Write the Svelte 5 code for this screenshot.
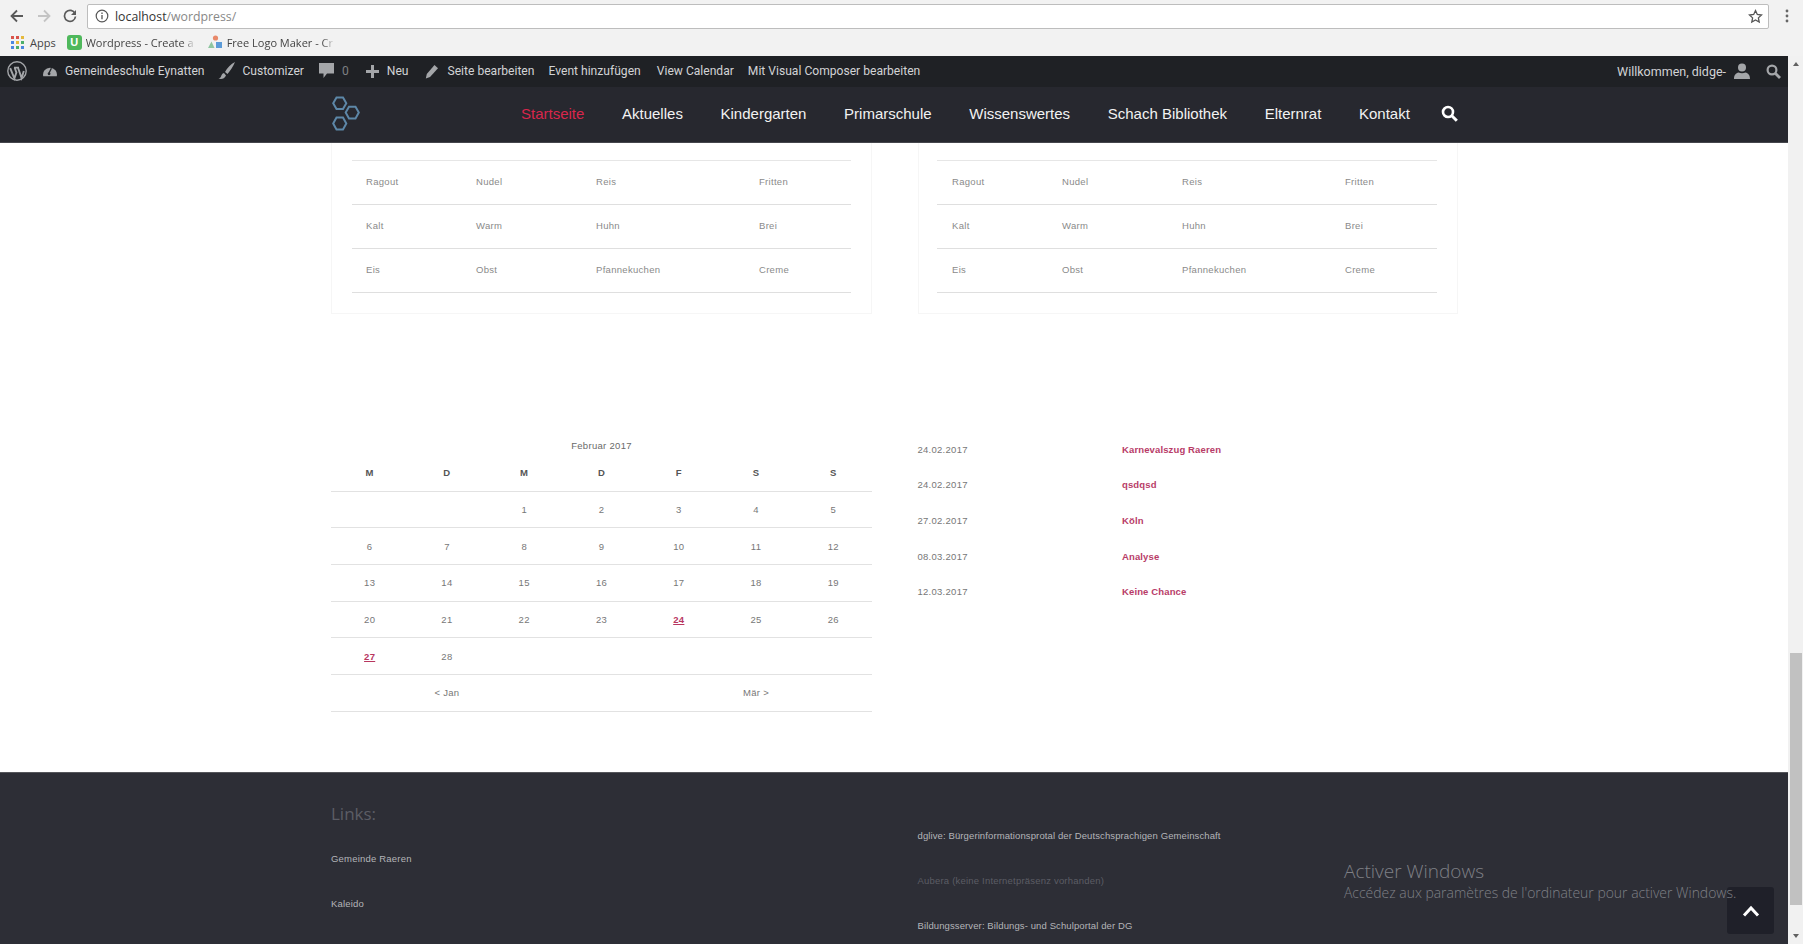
<script>
  const menu = ['Aktuelles', 'Kindergarten', 'Primarschule', 'Wissenswertes', 'Schach Bibliothek', 'Elternrat', 'Kontakt']
  const food = [
    ['Ragout', 'Nudel', 'Reis', 'Fritten'],
    ['Kalt', 'Warm', 'Huhn', 'Brei'],
    ['Eis', 'Obst', 'Pfannekuchen', 'Creme']
  ]
  const days = ['M', 'D', 'M', 'D', 'F', 'S', 'S']
  const weeks = [
    ['', '', 1, 2, 3, 4, 5],
    [6, 7, 8, 9, 10, 11, 12],
    [13, 14, 15, 16, 17, 18, 19],
    [20, 21, 22, 23, 24, 25, 26],
    [27, 28, '', '', '', '', '']
  ]
  const linked = [24, 27]
  const events = [
    ['24.02.2017', 'Karnevalszug Raeren'],
    ['24.02.2017', 'qsdqsd'],
    ['27.02.2017', 'Köln'],
    ['08.03.2017', 'Analyse'],
    ['12.03.2017', 'Keine Chance']
  ]
</script>

<div class="screen">
  <div class="browser">
    <div class="toolbar">
      <svg class="nav-btn" width="14" height="14" viewBox="0 0 14 14"><path d="M13 7H2M7 1.500 1.500 7 7 12.500" fill="none" stroke="#5a5a5a" stroke-width="1.800" /></svg>
      <svg class="nav-btn" width="14" height="14" viewBox="0 0 14 14"><path d="M1 7h11M7 1.500 12.500 7 7 12.500" fill="none" stroke="#c4c4c4" stroke-width="1.800" /></svg>
      <svg class="nav-btn" width="14" height="14" viewBox="0 0 14 14"><path d="M12 4.500A5.500 5.500 0 1 0 12.500 7.500" fill="none" stroke="#5a5a5a" stroke-width="1.700" /><path d="M13 1v5H8z" fill="#5a5a5a" /></svg>
      <div class="omnibox">
        <svg width="14" height="14" viewBox="0 0 14 14"><circle cx="7" cy="7" r="5.800" fill="none" stroke="#555" stroke-width="1.200" /><path d="M7 6v4.200M7 3.600v1.400" stroke="#555" stroke-width="1.300" /></svg>
        <span class="url">localhost<span class="url-path">/wordpress/</span></span>
        <svg class="star" width="15" height="15" viewBox="0 0 15 15"><path d="m7.500 1.600 1.800 3.900 4.200.5-3.100 2.900.8 4.200-3.700-2.100-3.700 2.100.8-4.200L1.500 6l4.200-.5z" fill="none" stroke="#555" stroke-width="1.300" /></svg>
      </div>
      <svg class="kebab" width="4" height="14" viewBox="0 0 4 14"><circle cx="2" cy="2" r="1.400" fill="#666" /><circle cx="2" cy="7" r="1.400" fill="#666" /><circle cx="2" cy="12" r="1.400" fill="#666" /></svg>
    </div>
    <div class="bookmarks">
      <svg width="13" height="13" viewBox="0 0 13 13">
        <g fill="#d9534a"><rect width="3" height="3" /><rect x="5" width="3" height="3" /></g>
        <rect x="10" width="3" height="3" fill="#e5b93c" />
        <g fill="#4a86e0"><rect y="5" width="3" height="3" /><rect y="10" width="3" height="3" /></g>
        <rect x="5" y="5" width="3" height="3" fill="#e5b93c" />
        <rect x="10" y="5" width="3" height="3" fill="#4caf6a" />
        <rect x="5" y="10" width="3" height="3" fill="#4caf6a" />
        <rect x="10" y="10" width="3" height="3" fill="#4a86e0" />
      </svg>
      <span class="mark apps">Apps</span>
      <span class="u-icon">U</span>
      <span class="mark fade w-one">Wordpress - Create a</span>
      <svg class="logo-mark" width="14" height="14" viewBox="0 0 14 14"><circle cx="7.500" cy="3" r="2.600" fill="#e8896a" /><path d="M3.500 6.500 6.500 13H0z" fill="#8fc6a0" /><rect x="8" y="7" width="6" height="6" fill="#5c9bd8" /></svg>
      <span class="mark fade w-two">Free Logo Maker - Cr</span>
    </div>
  </div>

  <div class="body">
    <div class="page">
      <div class="adminbar">
        <svg class="wp" width="20" height="20" viewBox="0 0 20 20"><circle cx="10" cy="10" r="9.200" fill="none" stroke="#a4a6a9" stroke-width="1.400" /><path d="M3.200 7.200 7.400 17.400l2-5.800-1.700-4.800M7 6.600h5M11 6.800l3.600 10.200 2.200-7" fill="none" stroke="#a4a6a9" stroke-width="1.900" /></svg>
        <svg class="a-dash" width="16" height="17" viewBox="0 0 17 17"><path d="M1.300 13.500a7.400 7.400 0 1 1 14.400 0z" fill="#a4a6a9" /><path d="m7 11 3-6" stroke="#23262b" stroke-width="1.400" /><circle cx="7.500" cy="11" r="1.500" fill="#23262b" /></svg>
        <span class="a-site">Gemeindeschule Eynatten</span>
        <svg class="a-brush" width="18" height="20" viewBox="0 0 18 20"><path d="M17 1C13 3 9 7 7 11l2.500 2C12 10 15 6 17 1zM6 12c-2 .5-2.500 2-3 3.500-.3 1-1.300 1.700-2.500 2 2.500 1 6 .5 7.500-3z" fill="#a4a6a9" /></svg>
        <span class="a-custom">Customizer</span>
        <svg class="a-bubble" width="15" height="16" viewBox="0 0 15 16"><path d="M0 0h15v10.500H8L4.500 15v-4.500H0z" fill="#a4a6a9" /></svg>
        <span class="a-zero">0</span>
        <svg class="a-plus" width="13" height="13" viewBox="0 0 13 13"><path d="M6.500 0v13M0 6.500h13" stroke="#a4a6a9" stroke-width="3" /></svg>
        <span class="a-neu">Neu</span>
        <svg class="a-pencil" width="14" height="15" viewBox="0 0 14 15"><path d="M9.500 1 13 4.300 5 13 .8 14.500 1.800 10z" fill="#a4a6a9" /></svg>
        <span class="a-edit">Seite bearbeiten</span>
        <span class="a-event">Event hinzufügen</span>
        <span class="a-cal">View Calendar</span>
        <span class="a-vc">Mit Visual Composer bearbeiten</span>
        <span class="a-hello">Willkommen, didge-</span>
        <svg class="a-user" width="16" height="17" viewBox="0 0 16 17"><circle cx="8" cy="4.500" r="4" fill="#a4a6a9" /><path d="M0 16c0-4 2-6 4.500-6.500 2 1 5 1 7 0C14 10 16 12 16 16z" fill="#a4a6a9" /></svg>
        <svg class="a-search" width="15" height="15" viewBox="0 0 15 15"><circle cx="6" cy="6" r="4.400" fill="none" stroke="#a4a6a9" stroke-width="2.200" /><path d="m9.500 9.500 4.500 4.500" stroke="#a4a6a9" stroke-width="2.800" /></svg>
      </div>

      <header class="mainnav">
        <svg class="logo" width="32" height="36" viewBox="0 0 32 36">
          <g fill="none" stroke="#5d87a8" stroke-width="2">
            <path d="M7.500 1.500h6.500l3.300 5.800-3.300 5.800H7.500L4.200 7.300z" />
            <path d="M20 10.800h6.500l3.300 5.800-3.300 5.800H20l-3.300-5.800z" />
            <path d="M7.500 21.500h6.500l3.300 6-3.300 6H7.500l-3.300-6z" />
          </g>
        </svg>
        <nav class="menu">
          <span class="active">Startseite</span>
          {#each menu as item}
            <span>{item}</span>
          {/each}
          <svg class="menu-search" width="17" height="17" viewBox="0 0 17 17"><circle cx="7" cy="7" r="5" fill="none" stroke="#fff" stroke-width="2.600" /><path d="m10.800 10.800 5 5" stroke="#fff" stroke-width="3" /></svg>
        </nav>
      </header>

      <main>
        <section class="wrap cards">
          {#each [0, 1] as card}
            <div class="card">
              <table>
                <tbody>
                  {#each food as row}
                    <tr>
                      {#each row as cell}
                        <td>{cell}</td>
                      {/each}
                    </tr>
                  {/each}
                </tbody>
              </table>
            </div>
          {/each}
        </section>

        <section class="wrap agenda">
          <div class="calendar">
            <div class="cal-title">Februar 2017</div>
            <div class="cal-row head">
              {#each days as d}
                <span>{d}</span>
              {/each}
            </div>
            {#each weeks as week}
              <div class="cal-row">
                {#each week as n}
                  <span class:hit={linked.includes(n)}>{n}</span>
                {/each}
              </div>
            {/each}
            <div class="cal-row">
              <span class="prev">&lt; Jan</span>
              <span class="next">Mär &gt;</span>
            </div>
          </div>
          <ul class="events">
            {#each events as e}
              <li><span class="date">{e[0]}</span><span class="title">{e[1]}</span></li>
            {/each}
          </ul>
        </section>
      </main>

      <footer>
        <div class="wrap foot">
          <div class="foot-left">
            <h4>Links:</h4>
            <p>Gemeinde Raeren</p>
            <p>Kaleido</p>
          </div>
          <div class="foot-right">
            <p>dglive: Bürgerinformationsprotal der Deutschsprachigen Gemeinschaft</p>
            <p class="dim">Aubera (keine Internetpräsenz vorhanden)</p>
            <p>Bildungsserver: Bildungs- und Schulportal der DG</p>
          </div>
        </div>
      </footer>

      <div class="totop">
        <svg width="18" height="12" viewBox="0 0 18 12"><path d="M2 10.500 9 3l7 7.500" fill="none" stroke="#fff" stroke-width="3" /></svg>
      </div>
      <div class="watermark">
        <div class="wm-big">Activer Windows</div>
        <div class="wm-small">Accédez aux paramètres de l'ordinateur pour activer Windows.</div>
      </div>
    </div>

    <div class="scrollbar">
      <span class="arrow up"></span>
      <div class="track"><div class="thumb"></div></div>
      <span class="arrow down"></span>
    </div>
  </div>
</div>

<style>
  :global(body) {
    margin: 0;
    overflow: hidden;
    background: #fff;
  }
  .screen {
    width: 1803px;
    height: 944px;
    display: flex;
    flex-direction: column;
    overflow: hidden;
    font-family: 'Liberation Sans', Arial, sans-serif;
  }

  /* browser chrome */
  .browser {
    height: 56px;
    flex: none;
    background: #f2f2f2;
    font-family: 'Open Sans', sans-serif;
  }
  .toolbar {
    height: 32px;
    display: flex;
    align-items: center;
    padding-left: 10px;
  }
  .nav-btn {
    margin-right: 12.500px;
  }
  .omnibox {
    width: 1682px;
    height: 25px;
    box-sizing: border-box;
    margin-left: -2.500px;
    display: flex;
    align-items: center;
    padding: 0 5px 0 7px;
    background: #fff;
    border: 1px solid #bdbdbd;
    border-radius: 2px;
    font-size: 12.300px;
  }
  .url {
    margin-left: 6px;
    color: #333;
  }
  .url-path {
    color: #888;
  }
  .star {
    margin-left: auto;
  }
  .kebab {
    margin-left: 16px;
  }
  .bookmarks {
    height: 24px;
    box-sizing: border-box;
    padding: 0 0 4px 11px;
    display: flex;
    align-items: center;
    font-size: 11px;
    color: #444;
    white-space: nowrap;
  }
  .mark {
    display: block;
  }
  .apps {
    margin-left: 6px;
  }
  .u-icon {
    margin-left: 11px;
    width: 15px;
    height: 15px;
    border-radius: 3px;
    background: #4fb85c;
    color: #fff;
    font: bold 11px/15px 'Liberation Sans', sans-serif;
    text-align: center;
  }
  .fade {
    -webkit-mask-image: linear-gradient(to right, #000 88%, transparent);
    mask-image: linear-gradient(to right, #000 88%, transparent);
  }
  .w-one {
    margin-left: 4px;
    width: 110px;
  }
  .logo-mark {
    margin-left: 12px;
  }
  .w-two {
    margin-left: 5px;
    width: 108px;
  }

  .body {
    flex: 1;
    min-height: 0;
    display: flex;
  }
  .page {
    position: relative;
    width: 1788px;
    display: flex;
    flex-direction: column;
    overflow: hidden;
  }

  /* wordpress admin bar */
  .adminbar {
    height: 31px;
    flex: none;
    display: flex;
    align-items: center;
    padding-bottom: 1px;
    background: #1f2125;
    color: #d2d3d5;
    font-family: Roboto, sans-serif;
    font-size: 12.100px;
    white-space: nowrap;
    box-sizing: border-box;
  }
  .adminbar svg {
    flex: none;
  }
  .wp { margin-left: 7px; }
  .a-dash { margin-left: 15px; }
  .a-site { margin-left: 7px; }
  .a-brush { margin-left: 14px; }
  .a-custom { margin-left: 6px; }
  .a-bubble { margin-left: 15px; }
  .a-zero { margin-left: 8px; color: #7d7f82; }
  .a-plus { margin-left: 17px; }
  .a-neu { margin-left: 8px; }
  .a-pencil { margin-left: 17px; }
  .a-edit { margin-left: 8px; }
  .a-event { margin-left: 14px; }
  .a-cal { margin-left: 16px; }
  .a-vc { margin-left: 14px; }
  .a-hello { margin-left: auto; font-size: 12.500px; }
  .a-user { margin-left: 8px; }
  .a-search { margin: 0 7px 0 16px; }

  /* site header */
  .mainnav {
    height: 55.500px;
    flex: none;
    box-sizing: border-box;
    display: flex;
    align-items: center;
    padding: 0 0 1px 329px;
    background: #27282f;
    border-bottom: 1px solid #45464c;
  }
  .menu {
    display: flex;
    align-items: center;
    gap: 37.650px;
    margin-left: 160px;
    color: #f2f2f2;
    font-size: 15px;
  }
  .menu-search {
    margin-left: -7px;
  }
  .active {
    color: #d8264c;
  }

  .wrap {
    display: grid;
    grid-template-columns: 541px 540.500px;
    column-gap: 45.500px;
    margin-left: 331px;
  }

  /* cards cut off under the header */
  main {
    flex: 1;
    min-height: 0;
  }
  .card {
    height: 171px;
    box-sizing: border-box;
    padding: 17.500px 20px 0;
    border: 1px solid #f6f6f6;
    border-top: 0;
  }
  .card + .card {
    padding-left: 18.500px;
  }
  table {
    width: 100%;
    border-collapse: collapse;
    table-layout: fixed;
    border-top: 1px solid #e6e6e6;
  }
  tr {
    height: 44px;
    border-bottom: 1px solid #dfdfdf;
  }
  td {
    padding: 0 0 2px 14px;
    font-size: 9.500px;
    letter-spacing: 0.300px;
    color: #8a8a8a;
  }
  .card + .card td:first-child {
    padding-left: 15px;
  }
  td:nth-child(1) { width: 96px; }
  td:nth-child(2) { width: 106px; }
  td:nth-child(3) { width: 149px; }

  /* calendar and events */
  .agenda {
    margin-top: 124px;
  }
  .cal-title {
    height: 25px;
    line-height: 16px;
    text-align: center;
    font-size: 9.500px;
    letter-spacing: 0.300px;
    color: #6a6a6a;
  }
  .cal-row {
    display: grid;
    grid-template-columns: repeat(7, 1fr);
    height: 36.700px;
    box-sizing: border-box;
    align-items: center;
    text-align: center;
    border-bottom: 1px solid #e2e2e2;
    font-size: 9.500px;
    letter-spacing: 0.300px;
    color: #777;
  }
  .head {
    font-weight: bold;
    color: #555;
    height: 29px;
    padding-bottom: 8px;
  }
  .hit {
    color: #b8365f;
    font-weight: bold;
    text-decoration: underline;
  }
  .prev {
    grid-column: 2;
  }
  .next {
    grid-column: 6;
  }
  .events {
    list-style: none;
    margin: -6px 0 0;
    padding: 0;
  }
  .events li {
    display: flex;
    height: 35.600px;
    align-items: center;
    font-size: 9.500px;
    letter-spacing: 0.270px;
    color: #777;
  }
  .date {
    width: 204.500px;
  }
  .title {
    color: #b83c68;
    font-weight: bold;
    letter-spacing: 0.130px;
  }

  /* footer */
  footer {
    height: 172px;
    flex: none;
    box-sizing: border-box;
    background: #2d2e36;
    border-top: 1px solid #55565b;
  }
  h4 {
    margin: 29px 0 0;
    height: 24px;
    font: 400 17px/24px 'Open Sans', sans-serif;
    color: #5c5d65;
  }
  .foot p {
    margin: 0;
    font-size: 9.500px;
    letter-spacing: 0.200px;
    color: #b4b5b9;
  }
  .foot-left p {
    margin-top: 27px;
    line-height: 11px;
  }
  .foot-left p + p {
    margin-top: 34px;
  }
  .foot-right {
    padding-top: 57px;
  }
  .foot .foot-right p {
    height: 45px;
    line-height: 11px;
    letter-spacing: 0.110px;
  }
  .foot .foot-right .dim {
    color: #5c5d65;
    letter-spacing: 0.200px;
  }

  /* overlays */
  .watermark {
    position: absolute;
    left: 1344px;
    top: 802px;
    color: #7f8086;
    font-family: 'Open Sans', sans-serif;
    white-space: nowrap;
  }
  .wm-big {
    font-size: 19px;
    font-weight: 300;
    line-height: 26px;
  }
  .wm-small {
    font-size: 13.950px;
    font-weight: 300;
    line-height: 18px;
  }
  .totop {
    position: absolute;
    left: 1727px;
    top: 831px;
    width: 47px;
    height: 47px;
    display: flex;
    align-items: center;
    justify-content: center;
    background: #1f2029;
    border-radius: 3px;
  }

  /* scrollbar */
  .scrollbar {
    width: 15px;
    display: flex;
    flex-direction: column;
    align-items: center;
    background: #f1f1f1;
  }
  .arrow {
    flex: none;
    width: 0;
    height: 0;
    margin: 6px 0;
    border-left: 3px solid transparent;
    border-right: 3px solid transparent;
  }
  .up {
    border-bottom: 4px solid #606060;
  }
  .down {
    border-top: 4px solid #606060;
  }
  .track {
    flex: 1;
    width: 100%;
    display: flex;
    flex-direction: column;
    justify-content: flex-end;
  }
  .thumb {
    height: 252px;
    margin: 0 1px 23px 2px;
    background: #c1c1c1;
  }
</style>
